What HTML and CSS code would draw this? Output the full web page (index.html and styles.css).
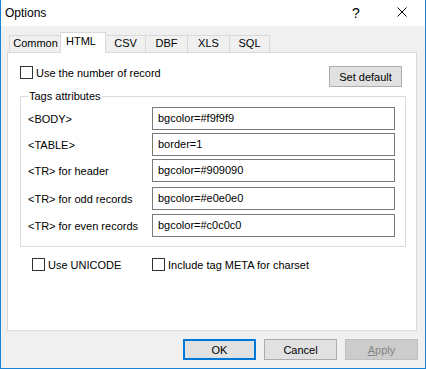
FILE: index.html
```html
<!DOCTYPE html>
<html>
<head>
<meta charset="utf-8">
<link rel="stylesheet" href="styles.css">
</head>
<body>
<div class="window">
  <div class="titlebar">
    <span class="title">Options</span>
    <span class="cap-btn help">?</span>
    <span class="cap-btn close"><svg width="10" height="10" viewBox="0 0 10 10"><path d="M0.5 0.5 L9.5 9.5 M9.5 0.5 L0.5 9.5" stroke="#000" stroke-width="1" fill="none"/></svg></span>
  </div>
  <div class="tabs">
    <div class="tab t-common">Common</div>
    <div class="tab t-html active">HTML</div>
    <div class="tab t-csv">CSV</div>
    <div class="tab t-dbf">DBF</div>
    <div class="tab t-xls">XLS</div>
    <div class="tab t-sql">SQL</div>
  </div>
  <div class="panel">
    <div class="row-top">
      <label class="check"><span class="box"></span>Use the number of record</label>
      <button class="btn">Set default</button>
    </div>
    <fieldset class="group">
      <legend>Tags attributes</legend>
      <div class="field"><span class="lbl">&lt;BODY&gt;</span><div class="input">bgcolor=#f9f9f9</div></div>
      <div class="field"><span class="lbl">&lt;TABLE&gt;</span><div class="input">border=1</div></div>
      <div class="field"><span class="lbl">&lt;TR&gt; for header</span><div class="input">bgcolor=#909090</div></div>
      <div class="field f-odd"><span class="lbl">&lt;TR&gt; for odd records</span><div class="input">bgcolor=#e0e0e0</div></div>
      <div class="field f-even"><span class="lbl">&lt;TR&gt; for even records</span><div class="input">bgcolor=#c0c0c0</div></div>
    </fieldset>
    <div class="opts">
      <label class="check"><span class="box"></span>Use UNICODE</label>
      <label class="check"><span class="box"></span>Include tag META for charset</label>
    </div>
  </div>
  <div class="buttons">
    <button class="btn default">OK</button>
    <button class="btn">Cancel</button>
    <button class="btn disabled"><u>A</u>pply</button>
  </div>
</div>
</body>
</html>
```
FILE: styles.css
```css
* { box-sizing: border-box; }
html, body { margin: 0; padding: 0; background: #fff; }
body {
  font-family: "Liberation Sans", Arial, sans-serif;
  font-size: 11px;
  color: #000;
}
.window {
  width: 426px;
  height: 369px;
  border: 1px solid #1883d7;
  border-top: none;
  background: #f0f0f0;
  display: flex;
  flex-direction: column;
}
.titlebar {
  height: 26px;
  flex: none;
  background: #fff;
  display: flex;
  align-items: center;
  padding-left: 4px;
}
.title { flex: 1; font-size: 12px; }
.cap-btn {
  width: 46px;
  height: 26px;
  display: flex;
  align-items: center;
  justify-content: center;
}
.help { font-size: 14px; padding-bottom: 1px; }
.close { padding-bottom: 2px; }

.tabs {
  display: flex;
  align-items: flex-end;
  height: 20px;
  margin: 6px 0 0 8px;
  flex: none;
}
.tab {
  height: 17px;
  border: 1px solid #d9d9d9;
  border-bottom: none;
  background: #f0f0f0;
  text-align: center;
  line-height: 15px;
  margin-left: -1px;
}
.t-common { width: 53px; margin-left: 0; }
.t-html { width: 46px; margin-left: -2px; }
.t-csv { width: 41px; }
.t-dbf { width: 43px; }
.t-xls { width: 43px; }
.t-sql { width: 41px; }
.tab.active {
  height: 21px;
  margin-bottom: -1px;
  background: #fff;
  position: relative;
  z-index: 1;
  line-height: 17px;
  padding-right: 4px;
}

.panel {
  flex: none;
  height: 279px;
  margin: 0 8px 0 6px;
  border: 1px solid #d9d9d9;
  background: #fff;
  padding: 13px 14px 0 12px;
}
.row-top {
  display: flex;
  justify-content: space-between;
  align-items: flex-start;
  height: 21px;
}
.check {
  display: flex;
  align-items: center;
  height: 13px;
  gap: 3px;
}
.box {
  width: 13px;
  height: 13px;
  border: 1px solid #333;
  background: #fff;
  flex: none;
}
.btn {
  font: inherit;
  color: #000;
  width: 73px;
  height: 21px;
  border: 1px solid #adadad;
  background: #e1e1e1;
  padding: 0;
  margin: 0;
}
.btn.default { border: 2px solid #0078d7; }
.btn.disabled { background: #cccccc; border-color: #bfbfbf; color: #838383; }

.group {
  width: 386px;
  margin: 3px 0 0 0;
  padding: 4px 10px 9px 7px;
  border: 1px solid #dcdcdc;
}
.group legend {
  padding: 0 1px;
  line-height: 13px;
}
.field {
  display: flex;
  align-items: center;
  height: 23px;
}
.field + .field { margin-top: 3px; }
.field.f-odd { margin-top: 5px; }
.field.f-even { margin-top: 4px; }
.lbl { width: 124px; flex: none; }
.input {
  flex: 1;
  height: 23px;
  border: 1px solid #7a7a7a;
  padding-left: 5px;
  line-height: 20px;
}

.opts {
  display: grid;
  grid-template-columns: 120px auto;
  margin-top: 11px;
  padding-left: 12px;
}

.buttons {
  flex: none;
  display: flex;
  justify-content: flex-end;
  gap: 8px;
  padding: 8px 7px 0 0;
}
```
